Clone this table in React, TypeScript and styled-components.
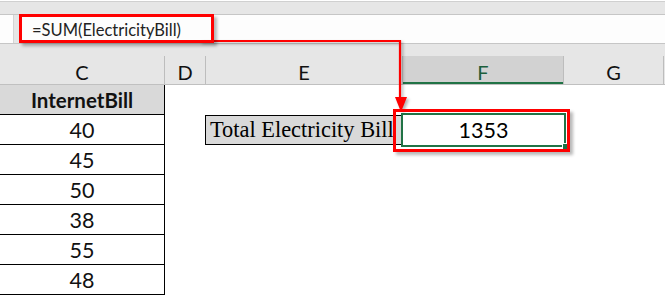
import React from 'react';
import styled, { createGlobalStyle } from 'styled-components';

const GlobalStyle = createGlobalStyle`
  html, body {
    margin: 0;
    padding: 0;
    background: #ffffff;
  }
  body {
    font-family: Lato, "Open Sans", sans-serif;
    overflow: hidden;
  }
`;

const COLUMNS = '165px 41px 197px 161px 100px 1fr';
const GREEN = '#217346';
const RED = '#ff0000';

const Sheet = styled.div`
  position: relative;
  width: 665px;
  height: 296px;
  overflow: hidden;
  background: #ffffff;
`;

const Ribbon = styled.div`
  height: 12px;
  margin-top: 1px;
  background: #e6e6e6;
  border-top: 1px solid #d0d0d0;
  border-bottom: 1px solid #c6c6c6;
`;

const FormulaBar = styled.div`
  display: flex;
  height: 28px;
  background: #e6e6e6;
  border-bottom: 1px solid #c6c6c6;
`;

const NameBox = styled.div`
  width: 13px;
  background: #fdfdfd;
  border-right: 1px solid #d4d4d4;
`;

const FormulaInput = styled.div`
  flex: 1;
  margin-left: 5px;
  display: flex;
  align-items: center;
  padding-left: 13px;
  padding-top: 1px;
  background: #fdfdfd;
  font-size: 16.5px;
  color: #222;
`;

const Spacer = styled.div`
  height: 12px;
  background: #e6e6e6;
`;

const HeaderRow = styled.div`
  display: grid;
  grid-template-columns: ${COLUMNS};
  height: 28px;
  background: #e6e6e6;
  border-bottom: 1px solid #c0c0c0;
`;

const ColHeader = styled.div<{ $active?: boolean }>`
  display: flex;
  align-items: center;
  justify-content: center;
  padding-top: 3px;
  font-size: 20px;
  color: ${p => (p.$active ? '#1b5e3b' : '#111')};
  background: ${p => (p.$active ? '#d2d2d2' : 'transparent')};
  border-right: 1px solid #bdbdbd;
  box-shadow: ${p => (p.$active ? `inset 0 -2px 0 ${GREEN}` : 'none')};
  &:last-child {
    border-right: none;
  }
`;

const Grid = styled.div`
  display: grid;
  grid-template-columns: ${COLUMNS};
  grid-auto-rows: 30px;
`;

const Cell = styled.div<{ $boxed?: boolean; $head?: boolean }>`
  display: flex;
  align-items: center;
  justify-content: center;
  color: #111;
  border-right: ${p => (p.$boxed ? '1px solid #000' : 'none')};
  border-bottom: ${p => (p.$boxed ? '1px solid #000' : 'none')};
  background: ${p => (p.$head ? '#d9d9d9' : 'transparent')};
  font-weight: ${p => (p.$head ? 700 : 400)};
  font-size: ${p => (p.$head ? '20.5px' : '21.5px')};
`;

const LabelCell = styled.div`
  display: flex;
  align-items: center;
  margin-left: -1px;
  padding-left: 4px;
  background: #d9d9d9;
  border: 1px solid #000;
  font-family: "Liberation Serif", "Times New Roman", serif;
  font-size: 22.4px;
  color: #000;
  white-space: nowrap;
  overflow: hidden;
`;

const ActiveCell = styled.div`
  position: relative;
  display: flex;
  align-items: center;
  justify-content: center;
  font-size: 21.5px;
  color: #000;
  outline: 2px solid ${GREEN};
  outline-offset: 0;

  &::after {
    content: '';
    position: absolute;
    right: -5px;
    bottom: -5px;
    width: 5px;
    height: 5px;
    background: ${GREEN};
    border: 1px solid #fff;
  }
`;

const Callout = styled.div<{ $x: number; $y: number; $w: number; $h: number }>`
  position: absolute;
  left: ${p => p.$x}px;
  top: ${p => p.$y}px;
  width: ${p => p.$w}px;
  height: ${p => p.$h}px;
  box-sizing: border-box;
  border: 3px solid ${RED};
  box-shadow: 3px 3px 3px rgba(0, 0, 0, 0.28);
  pointer-events: none;
`;

const ArrowLayer = styled.svg`
  position: absolute;
  left: 0;
  top: 0;
  filter: drop-shadow(2px 2px 1.5px rgba(0, 0, 0, 0.3));
  pointer-events: none;
`;

const internetBills = [40, 45, 50, 38, 55, 48];
const headers = ['C', 'D', 'E', 'F', 'G', ''];

export default function App() {
  const rows = ['InternetBill', ...internetBills.map(String)];

  return (
    <>
      <GlobalStyle />
      <Sheet>
        <Ribbon />
        <FormulaBar>
          <NameBox />
          <FormulaInput>=SUM(ElectricityBill)</FormulaInput>
        </FormulaBar>
        <Spacer />
        <HeaderRow>
          {headers.map(h => (
            <ColHeader key={h || 'rest'} $active={h === 'F'}>
              {h}
            </ColHeader>
          ))}
        </HeaderRow>
        <Grid>
          {rows.map((value, i) => (
            <React.Fragment key={i}>
              <Cell $boxed $head={i === 0}>
                {value}
              </Cell>
              <div />
              {i === 1 ? <LabelCell>Total Electricity Bill</LabelCell> : <div />}
              {i === 1 ? <ActiveCell>1353</ActiveCell> : <div />}
              <div />
              <div />
            </React.Fragment>
          ))}
        </Grid>

        <ArrowLayer width="665" height="296" viewBox="0 0 665 296">
          <path d="M200 41 H400 V100" fill="none" stroke={RED} strokeWidth="2.2" />
          <polygon points="395,97 407,97 401,112" fill={RED} />
        </ArrowLayer>
        <Callout $x={19} $y={14} $w={195} $h={29} />
        <Callout $x={393} $y={109} $w={177} $h={43} />
      </Sheet>
    </>
  );
}
